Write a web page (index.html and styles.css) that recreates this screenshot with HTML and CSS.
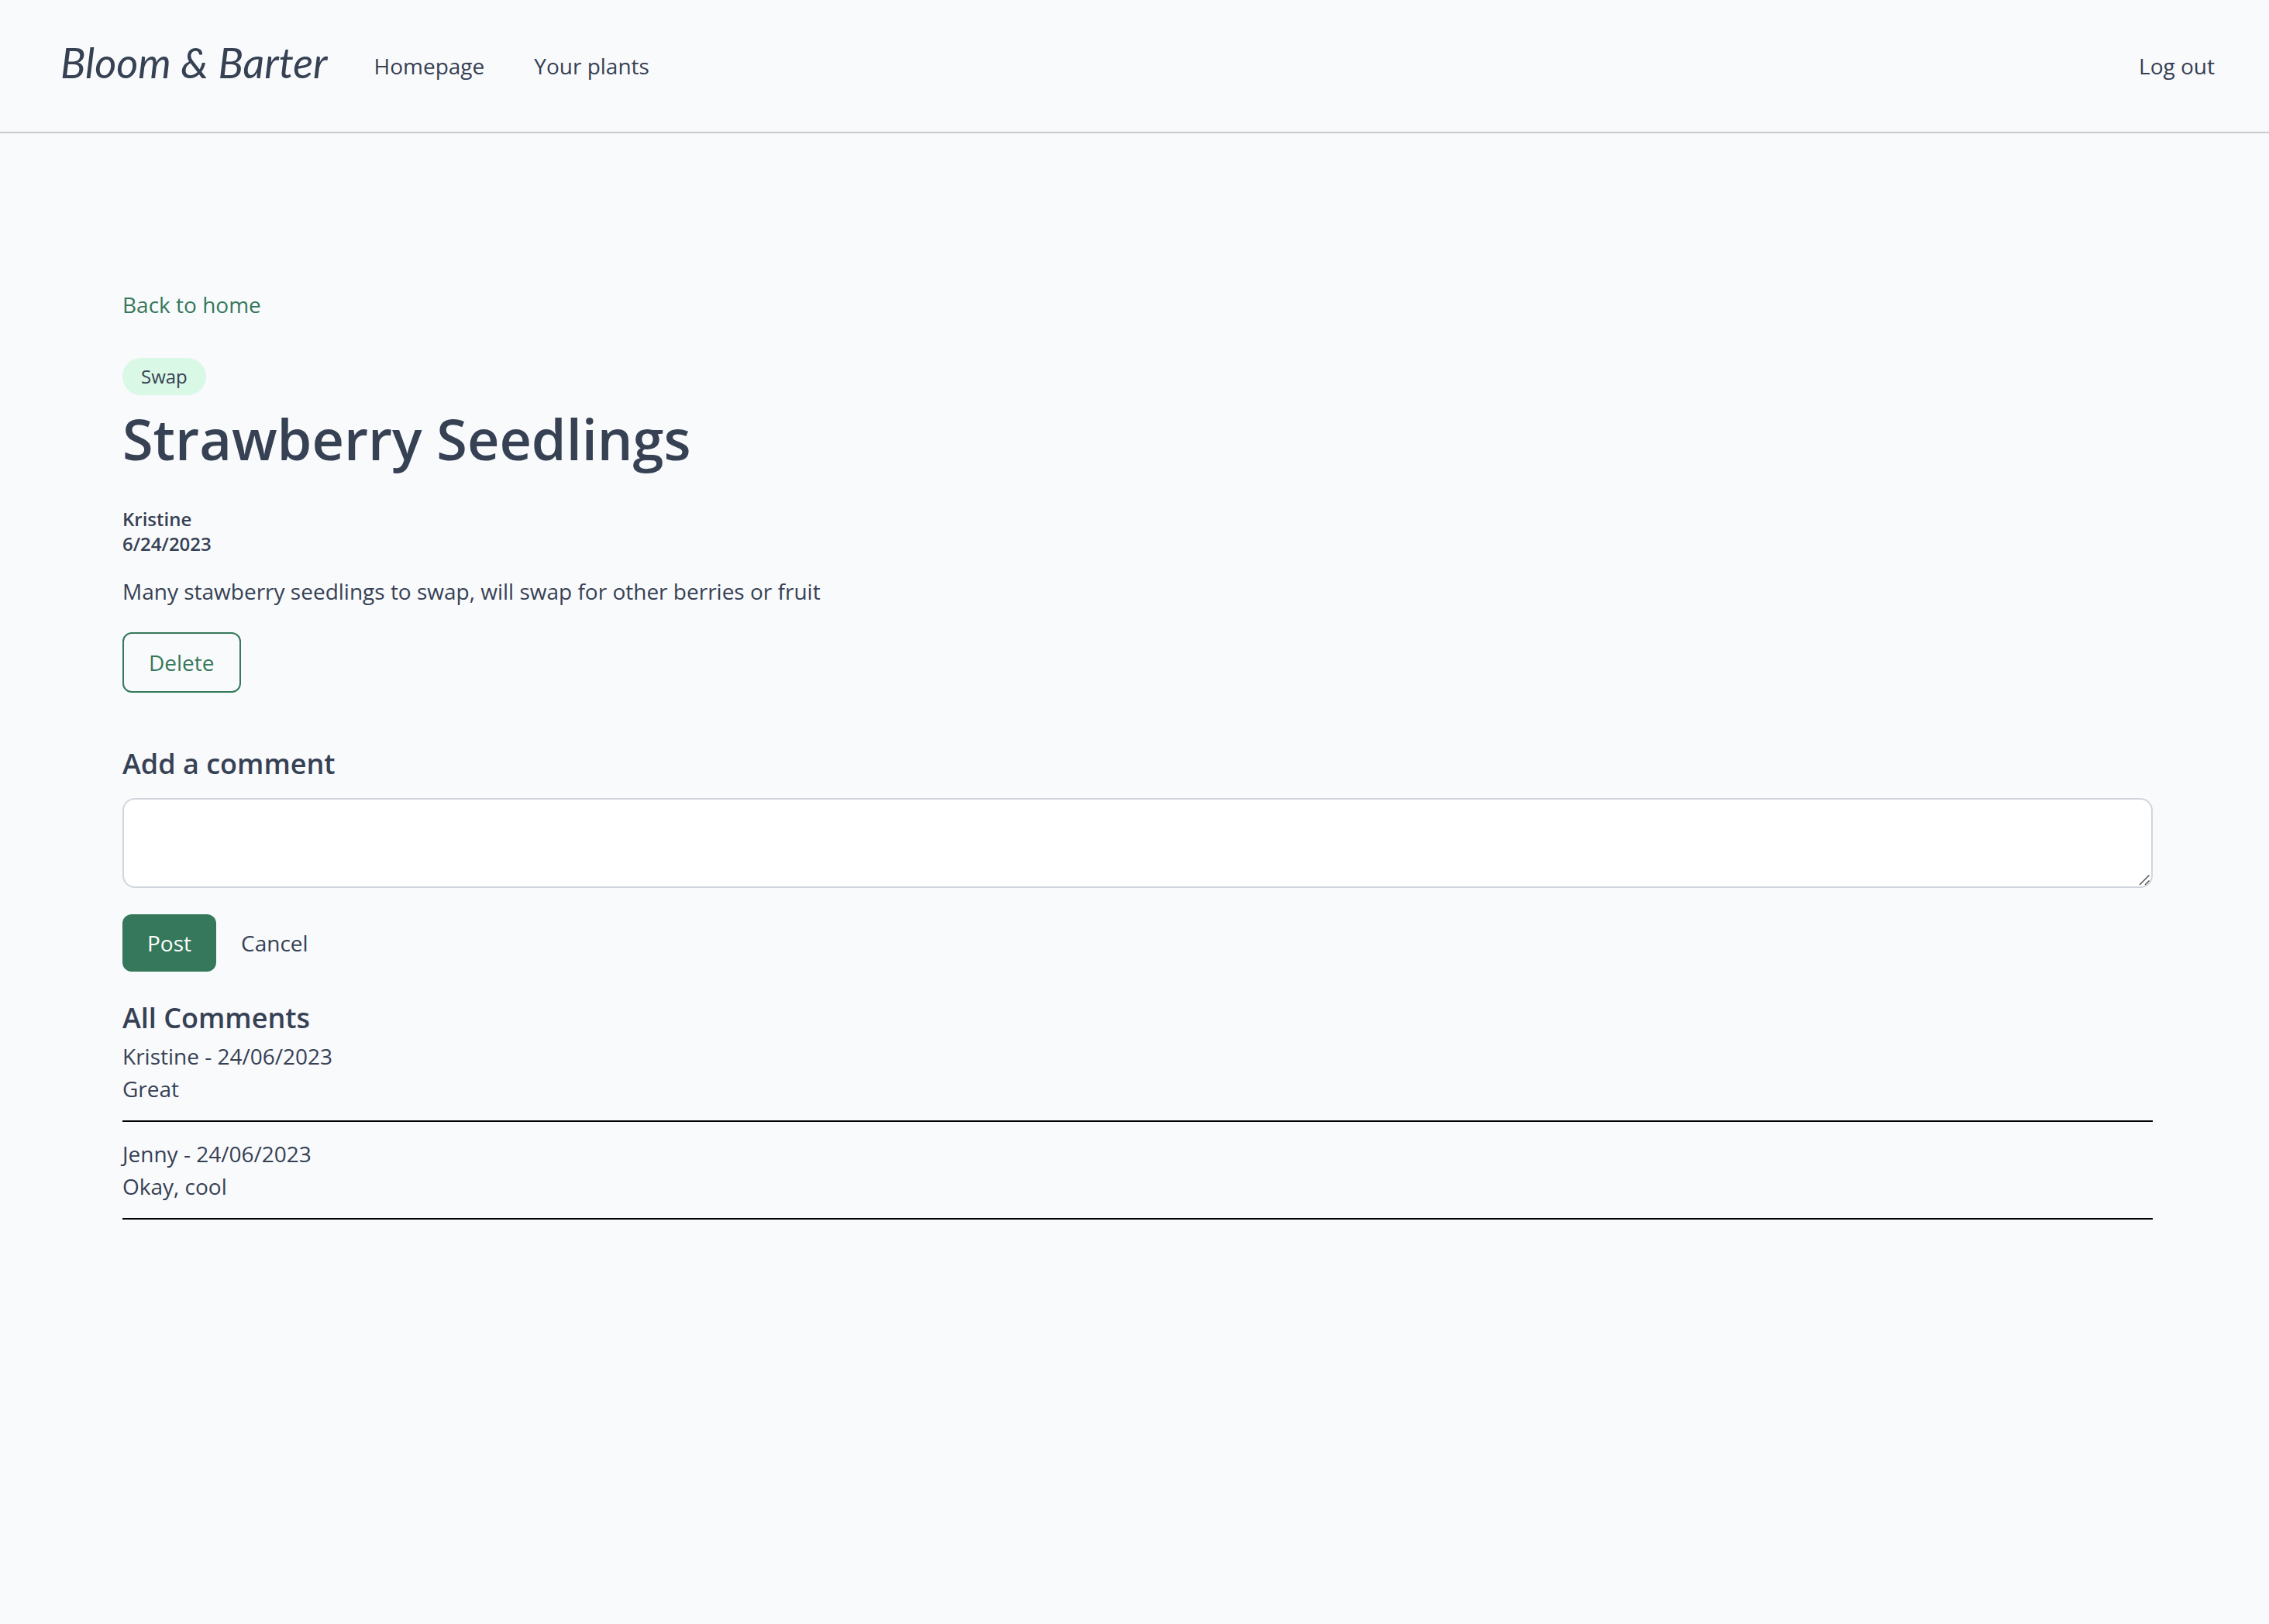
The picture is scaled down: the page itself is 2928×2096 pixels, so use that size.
FILE: index.html
```html
<!DOCTYPE html>
<html lang="en">
<head>
<meta charset="utf-8">
<meta name="viewport" content="width=device-width, initial-scale=1">
<title>Strawberry Seedlings</title>
<link rel="stylesheet" href="styles.css">
</head>
<body>
<header class="site-header">
  <a class="logo" href="#">Bloom &amp; Barter</a>
  <nav class="site-nav">
    <a href="#">Homepage</a>
    <a href="#">Your plants</a>
  </nav>
  <button class="text-button" type="button">Log out</button>
</header>
<main class="page">
  <a class="back-link" href="#">Back to home</a>
  <article class="listing">
    <span class="tag">Swap</span>
    <h1 class="listing-title">Strawberry Seedlings</h1>
    <div class="listing-meta">
      <p>Kristine</p>
      <p>6/24/2023</p>
    </div>
    <p class="listing-text">Many stawberry seedlings to swap, will swap for other berries or fruit</p>
    <button class="button button-outline" type="button">Delete</button>
  </article>
  <form class="comment-form">
    <label class="section-title" for="comment">Add a comment</label>
    <div class="comment-field">
      <textarea class="comment-input" id="comment"></textarea>
      <svg class="resize-grip" width="20" height="20" viewBox="0 0 20 20" aria-hidden="true">
        <path d="M3 16 15.500 3.500M10 16l5.500-5.500" fill="none" stroke="#555" stroke-width="1.500"/>
      </svg>
    </div>
    <div class="form-actions">
      <button class="button button-primary" type="button">Post</button>
      <button class="text-button" type="button">Cancel</button>
    </div>
  </form>
  <section class="comments">
    <h2 class="section-title">All Comments</h2>
    <div class="comment">
      <p>Kristine - 24/06/2023</p>
      <p>Great</p>
    </div>
    <div class="comment">
      <p>Jenny - 24/06/2023</p>
      <p>Okay, cool</p>
    </div>
  </section>
</main>
</body>
</html>
```
FILE: styles.css
```css
* {
  box-sizing: border-box;
}

body {
  margin: 0;
  min-height: 100vh;
  background: #f9fafc;
  color: #364154;
  font: 28px/42px "Open Sans", "Noto Sans", sans-serif;
}

h1, h2, p {
  margin: 0;
}

a {
  color: inherit;
  text-decoration: none;
}

button {
  font: inherit;
  color: inherit;
  cursor: pointer;
}

.site-header {
  display: flex;
  align-items: center;
  gap: 60px;
  padding: 52px 70px 52px 78px;
  border-bottom: 2px solid #c9cacd;
}

.logo {
  padding-bottom: 8px;
  font: italic 400 54px/58px Lato, sans-serif;
}

.site-nav {
  display: flex;
  flex: 1;
  gap: 64px;
}

.text-button {
  padding: 0;
  border: 0;
  background: none;
}

.page {
  padding: 200px 150px 64px 158px;
}

.back-link {
  display: block;
  color: #35785b;
}

.listing {
  display: flex;
  flex-direction: column;
  align-items: flex-start;
  margin-top: 48px;
}

.tag {
  padding: 6px 24px;
  border-radius: 24px;
  background: #d9f8e5;
  font-size: 24px;
  line-height: 36px;
}

.listing-title {
  margin-top: 11px;
  font-size: 72px;
  font-weight: 600;
  line-height: 90px;
}

.listing-meta {
  margin-top: 43px;
  font-size: 24px;
  font-weight: 600;
  line-height: 32px;
}

.listing-text {
  margin: 24px 0 32px;
}

.button {
  padding: 16px 32px;
  border: 0;
  border-radius: 12px;
}

.button-outline {
  border: 2px solid #35785b;
  background: none;
  color: #35785b;
}

.button-primary {
  background: #35785b;
  color: #fff;
}

.comment-form {
  margin-top: 68px;
}

.section-title {
  display: block;
  font-size: 36px;
  font-weight: 600;
  line-height: 48px;
}

.comment-field {
  position: relative;
  margin-top: 20px;
}

.comment-input {
  display: block;
  width: 100%;
  height: 116px;
  padding: 16px;
  border: 2px solid #d1d5db;
  border-radius: 16px;
  background: #fff;
  color: inherit;
  font: inherit;
  resize: vertical;
}

.comment-input::-webkit-resizer {
  background: transparent;
}

.resize-grip {
  position: absolute;
  right: 0;
  bottom: 0;
  pointer-events: none;
}

.form-actions {
  display: flex;
  align-items: center;
  gap: 32px;
  margin: 34px 0;
}

.comments .section-title {
  padding-top: 2px;
  margin-bottom: 4px;
}

.comment {
  padding-bottom: 20px;
  margin-bottom: 20px;
  border-bottom: 2px solid #000;
}
```
